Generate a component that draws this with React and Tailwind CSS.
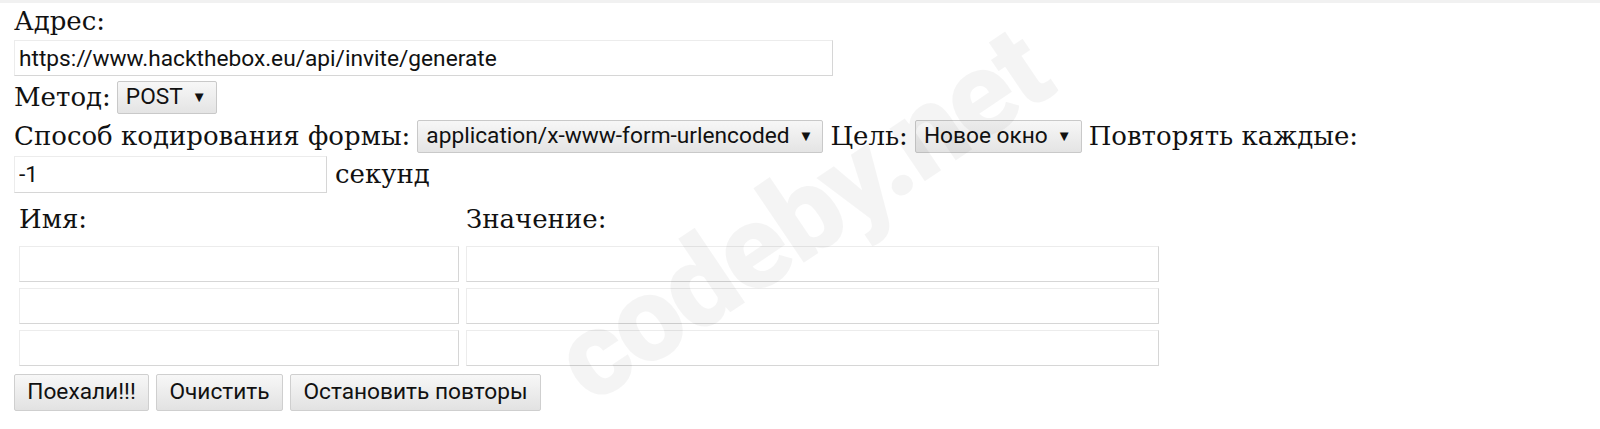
import React from "react";

const serif = "font-['DejaVu_Serif','Liberation_Serif',serif]";
const sans = "font-['Roboto','Liberation_Sans',sans-serif]";

function Select({ value, className = "" }) {
  return (
    <div
      className={`inline-flex items-center shrink-0 h-[33px] pl-[8px] pr-[9px] border border-[#c9c9c9] rounded-[2px] bg-gradient-to-b from-[#f7f7f7] to-[#e4e4e4] text-[22.7px] text-[#111] whitespace-nowrap ${sans} ${className}`}
    >
      <span>{value}</span>
      <span className="text-[15px] ml-[9px]">▼</span>
    </div>
  );
}

function Field({ value = "", className = "" }) {
  return (
    <input
      readOnly
      value={value}
      className={`h-[36px] px-[4px] border border-[#d6d6d6] border-t-[#ececec] border-l-[#ececec] bg-transparent text-[22.7px] text-[#111] outline-none ${sans} ${className}`}
    />
  );
}

function Btn({ children, className = "" }) {
  return (
    <button
      className={`h-[37px] px-[12px] border border-[#cfcfcf] rounded-[2px] bg-gradient-to-b from-[#f7f7f7] to-[#e2e2e2] text-[22.7px] text-[#111] whitespace-nowrap ${sans} ${className}`}
    >
      {children}
    </button>
  );
}

export default function App() {
  const rows = [0, 1, 2];
  return (
    <div className={`relative w-[1600px] h-[429px] overflow-hidden bg-white text-[#111] ${serif}`}>
      <div className="h-[3px] bg-[#f1f1f1]" />
      <div className="pl-[14px] flex flex-col">
        <div className="h-[37px] text-[26px] leading-[37px]">Адрес:</div>
        <Field value="https://www.hackthebox.eu/api/invite/generate" className="w-[819px]" />
        <div className="flex items-center h-[42px] text-[26px] gap-[6px]">
          <span>Метод:</span>
          <Select value="POST" />
        </div>
        <div className="flex items-center h-[37px] text-[26px] gap-[7px] whitespace-nowrap">
          <span>Способ кодирования формы:</span>
          <Select value="application/x-www-form-urlencoded" />
          <span>Цель:</span>
          <Select value="Новое окно" />
          <span>Повторять каждые:</span>
        </div>
        <div className="flex items-center gap-[8px] text-[26px]">
          <Field value="-1" className="w-[313px] h-[37px]" />
          <span>секунд</span>
        </div>
        <div className="pl-[5px] mt-[8px] grid grid-cols-[440px_693px] gap-x-[7px] gap-y-[6px]">
          <div className="text-[26px] h-[38px] leading-[34px]">Имя:</div>
          <div className="text-[26px] h-[38px] leading-[34px]">Значение:</div>
          {rows.map((r) => (
            <React.Fragment key={r}>
              <Field className="w-full" />
              <Field className="w-full" />
            </React.Fragment>
          ))}
        </div>
        <div className="flex gap-[7px] mt-[8px]">
          <Btn className="w-[135px]">Поехали!!!</Btn>
          <Btn className="w-[127px]">Очистить</Btn>
          <Btn className="w-[251px]">Остановить повторы</Btn>
        </div>
      </div>
      <div className="pointer-events-none absolute left-[520px] top-[155px] -rotate-[34deg] text-[120px] font-black tracking-[-3px] text-black/[0.045] font-['Roboto','Liberation_Sans',sans-serif] leading-none">
        codeby.net
      </div>
    </div>
  );
}
